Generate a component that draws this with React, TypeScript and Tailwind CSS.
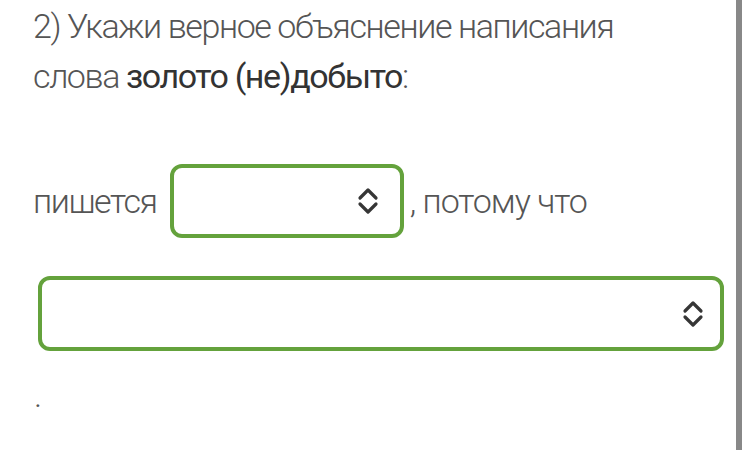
import React from "react";

function Chevrons({ className }: { className?: string }) {
  return (
    <svg
      viewBox="0 0 22 30"
      className={className}
      fill="none"
      stroke="#363636"
      strokeWidth={3.2}
      strokeLinecap="round"
      strokeLinejoin="round"
    >
      <path d="M3 12 L11 4 L19 12" />
      <path d="M3 18 L11 26 L19 18" />
    </svg>
  );
}

function SelectBox({ className }: { className: string }) {
  return (
    <div
      className={`flex items-center justify-end rounded-[12px] border-[4px] border-[#64a23c] bg-white ${className}`}
    >
      <Chevrons className="w-[22px] h-[30px]" />
    </div>
  );
}

export default function App() {
  return (
    <div className="flex w-[748px] h-[450px] overflow-hidden bg-white font-['Roboto',sans-serif] font-light text-[34px] leading-[50px] tracking-[-1.4px] text-[#555]">
      <div className="flex-1 pl-[33px] pt-[1px]">
        <p>
          2) Укажи верное объяснение написания
          <br />
          слова <span className="font-normal text-[#333]">золото (не)добыто</span>:
        </p>

        <div className="mt-[63px] flex items-center">
          <span>пишется</span>
          <SelectBox className="ml-[13px] w-[234px] h-[74px] pr-[21px]" />
          <span className="ml-[6px] tracking-[-1px]">, потому что</span>
        </div>

        <SelectBox className="mt-[38px] ml-[5px] w-[686px] h-[75px] pr-[16px]" />

        <p className="mt-[19px] pl-[1px]">.</p>
      </div>
      <div className="w-[6px] bg-[#888] mr-[6px]" />
    </div>
  );
}
